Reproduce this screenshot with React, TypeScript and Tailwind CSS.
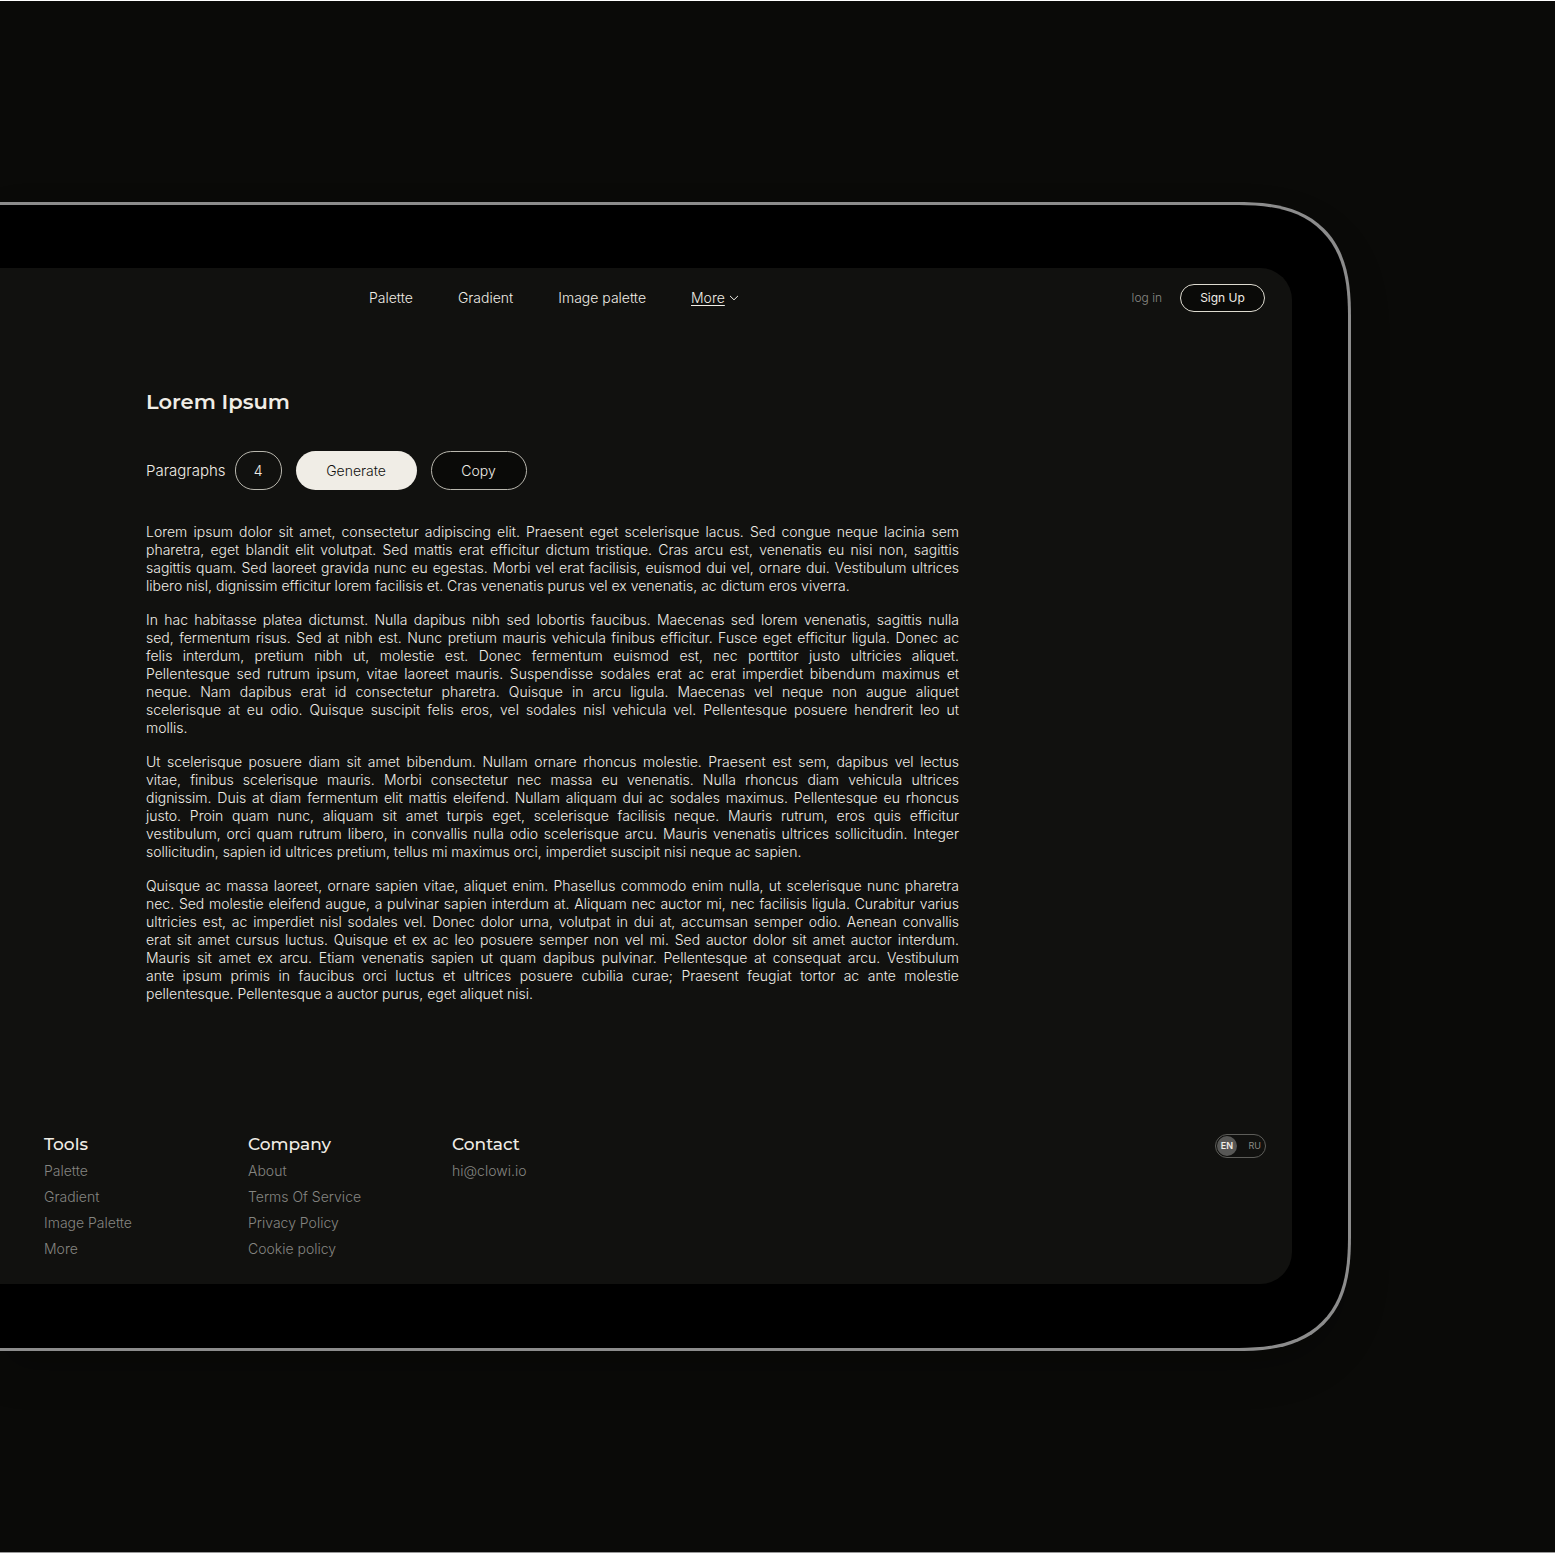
import React from "react";

const navLinks = ["Palette", "Gradient", "Image palette"];

const paragraphs = [
  [
    "Lorem ipsum dolor sit amet, consectetur adipiscing elit. Praesent eget scelerisque lacus. Sed congue neque lacinia sem",
    "pharetra, eget blandit elit volutpat. Sed mattis erat efficitur dictum tristique. Cras arcu est, venenatis eu nisi non, sagittis",
    "sagittis quam. Sed laoreet gravida nunc eu egestas. Morbi vel erat facilisis, euismod dui vel, ornare dui. Vestibulum ultrices",
    "libero nisl, dignissim efficitur lorem facilisis et. Cras venenatis purus vel ex venenatis, ac dictum eros viverra.",
  ],
  [
    "In hac habitasse platea dictumst. Nulla dapibus nibh sed lobortis faucibus. Maecenas sed lorem venenatis, sagittis nulla",
    "sed, fermentum risus. Sed at nibh est. Nunc pretium mauris vehicula finibus efficitur. Fusce eget efficitur ligula. Donec ac",
    "felis interdum, pretium nibh ut, molestie est. Donec fermentum euismod est, nec porttitor justo ultricies aliquet.",
    "Pellentesque sed rutrum ipsum, vitae laoreet mauris. Suspendisse sodales erat ac erat imperdiet bibendum maximus et",
    "neque. Nam dapibus erat id consectetur pharetra. Quisque in arcu ligula. Maecenas vel neque non augue aliquet",
    "scelerisque at eu odio. Quisque suscipit felis eros, vel sodales nisl vehicula vel. Pellentesque posuere hendrerit leo ut",
    "mollis.",
  ],
  [
    "Ut scelerisque posuere diam sit amet bibendum. Nullam ornare rhoncus molestie. Praesent est sem, dapibus vel lectus",
    "vitae, finibus scelerisque mauris. Morbi consectetur nec massa eu venenatis. Nulla rhoncus diam vehicula ultrices",
    "dignissim. Duis at diam fermentum elit mattis eleifend. Nullam aliquam dui ac sodales maximus. Pellentesque eu rhoncus",
    "justo. Proin quam nunc, aliquam sit amet turpis eget, scelerisque facilisis neque. Mauris rutrum, eros quis efficitur",
    "vestibulum, orci quam rutrum libero, in convallis nulla odio scelerisque arcu. Mauris venenatis ultrices sollicitudin. Integer",
    "sollicitudin, sapien id ultrices pretium, tellus mi maximus orci, imperdiet suscipit nisi neque ac sapien.",
  ],
  [
    "Quisque ac massa laoreet, ornare sapien vitae, aliquet enim. Phasellus commodo enim nulla, ut scelerisque nunc pharetra",
    "nec. Sed molestie eleifend augue, a pulvinar sapien interdum at. Aliquam nec auctor mi, nec facilisis ligula. Curabitur varius",
    "ultricies est, ac imperdiet nisl sodales vel. Donec dolor urna, volutpat in dui at, accumsan semper odio. Aenean convallis",
    "erat sit amet cursus luctus. Quisque et ex ac leo posuere semper non vel mi. Sed auctor dolor sit amet auctor interdum.",
    "Mauris sit amet ex arcu. Etiam venenatis sapien ut quam dapibus pulvinar. Pellentesque at consequat arcu. Vestibulum",
    "ante ipsum primis in faucibus orci luctus et ultrices posuere cubilia curae; Praesent feugiat tortor ac ante molestie",
    "pellentesque. Pellentesque a auctor purus, eget aliquet nisi.",
  ],
];

const footerColumns = [
  { title: "Tools", links: ["Palette", "Gradient", "Image Palette", "More"] },
  { title: "Company", links: ["About", "Terms Of Service", "Privacy Policy", "Cookie policy"] },
  { title: "Contact", links: ["hi@clowi.io"] },
];

function Header() {
  return (
    <header className="flex items-center pt-4 pr-[27px] pl-[369px]">
      <nav className="flex items-center gap-[45px] text-sm font-light">
        {navLinks.map((label) => (
          <a key={label} href="#">
            {label}
          </a>
        ))}
        <a href="#" className="flex items-center gap-1">
          <span className="underline underline-offset-2">More</span>
          <svg width="10" height="10" viewBox="0 0 10 10" fill="none" stroke="currentColor" aria-hidden="true">
            <path d="M1.3 3.2 5 6.8 8.7 3.2" strokeLinecap="round" strokeLinejoin="round" />
          </svg>
        </a>
      </nav>
      <div className="ml-auto flex items-center gap-[18px] text-xs">
        <a href="#" className="font-light text-[#8a8a86]">
          log in
        </a>
        <button className="h-7 w-[85px] rounded-full border border-[#dedbd0] bg-[#0a0a08]">Sign Up</button>
      </div>
    </header>
  );
}

function Generator() {
  return (
    <main className="pt-[74px] pl-[146px]">
      <h1 className="font-['Montserrat','Inter',sans-serif] text-[21px] leading-8 font-semibold">Lorem Ipsum</h1>
      <form className="mt-[33px] flex items-center font-light" onSubmit={(e) => e.preventDefault()}>
        <label htmlFor="count" className="text-[15px] leading-6">
          Paragraphs
        </label>
        <input
          id="count"
          defaultValue="4"
          inputMode="numeric"
          className="ml-[9px] h-[39px] w-[47px] rounded-[19px] border border-[#b9b7ae] bg-transparent text-center text-sm outline-none"
        />
        <button className="ml-[14px] h-[39px] w-[121px] rounded-full bg-[#f0ede6] text-sm text-[#11110f]">Generate</button>
        <button type="button" className="ml-[14px] h-[39px] w-24 rounded-full border border-[#b9b7ae] bg-[#0a0a08] text-sm">
          Copy
        </button>
      </form>
      <article className="mt-[33px] flex w-[813px] flex-col gap-4 text-sm leading-[18px] font-light">
        {paragraphs.map((lines) => (
          <p key={lines[0]}>
            {lines.map((line, i) => (
              <span
                key={line}
                className={i < lines.length - 1 ? "block text-justify [text-align-last:justify]" : "block"}
              >
                {line}{" "}
              </span>
            ))}
          </p>
        ))}
      </article>
    </main>
  );
}

function LanguageSwitch() {
  return (
    <div className="ml-auto flex h-6 w-[51px] items-center justify-between rounded-full border border-[#5d5d59] pr-1 pl-px text-[9px]">
      <button className="size-5 rounded-full bg-[#575755] font-semibold">EN</button>
      <button className="text-[#8a8a86]">RU</button>
    </div>
  );
}

function Footer() {
  return (
    <footer className="flex items-start pt-[131px] pr-[26px] pb-[22px] pl-11">
      {footerColumns.map(({ title, links }) => (
        <section key={title} className="w-[204px]">
          <h2 className="mb-1 font-['Montserrat','Inter',sans-serif] text-[17px] leading-5 font-medium">{title}</h2>
          <ul className="text-sm leading-[26px] font-light text-[#858581]">
            {links.map((label) => (
              <li key={label}>
                <a href="#">{label}</a>
              </li>
            ))}
          </ul>
        </section>
      ))}
      <LanguageSwitch />
    </footer>
  );
}

export default function App() {
  return (
    <div className="min-h-screen border-y border-t-white border-b-[#999] bg-[#0a0a08] pt-[201px] pr-[204px] pb-[200px] font-['Inter',sans-serif] text-[#f0ede6]">
      <div className="rounded-r-[82px] border-[3px] border-l-0 border-[#8c8c8c] bg-black pt-[63px] pr-14 pb-16 shadow-[0_20px_40px_rgba(0,0,0,0.2)] supports-[corner-shape:squircle]:rounded-r-[116px] supports-[corner-shape:squircle]:[corner-shape:superellipse(1.4)]">
        <div className="rounded-r-[32px] bg-[#11110f]">
          <Header />
          <Generator />
          <Footer />
        </div>
      </div>
    </div>
  );
}
